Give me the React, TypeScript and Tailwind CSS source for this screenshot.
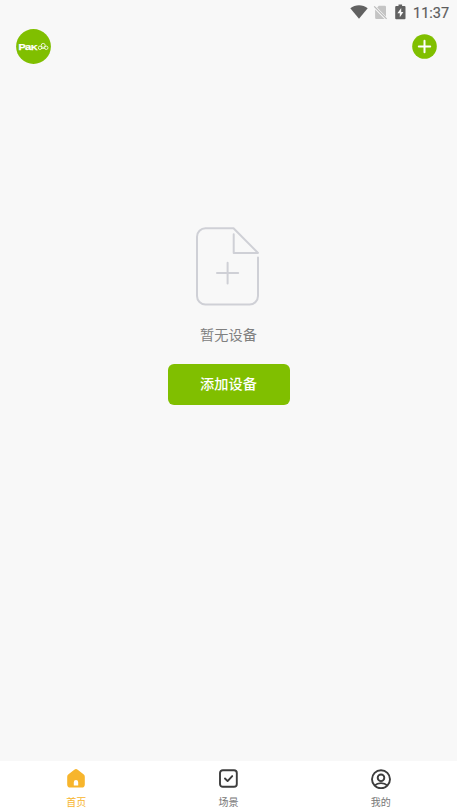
import type { ReactNode } from "react"

const WifiIcon = () => (
  <svg width="18" height="14" viewBox="0 0 18 14" fill="#616161">
    <path d="M0.3 3.2C2.8 1.3 5.8 0.3 9 0.3s6.2 1 8.7 2.9L9 13.8Z" />
  </svg>
)

const NoSimIcon = () => (
  <svg width="15" height="15" viewBox="0 0 15 15">
    <path
      d="M5.8 0.8h6a1.2 1.2 0 0 1 1.2 1.2v9.7L4.2 2.5ZM2.1 4.6l9.4 9.4H3.3a1.2 1.2 0 0 1-1.2-1.2Z"
      fill="#c4c4c4"
    />
    <path d="M1.2 1.4 13.6 13.8" stroke="#b9b9b9" strokeWidth="1.2" />
  </svg>
)

const BatteryIcon = () => (
  <svg width="11" height="16" viewBox="0 0 11 16">
    <path
      d="M3.5 0.5h3.6v1.4h2.4a1 1 0 0 1 1 1v11.3a1 1 0 0 1-1 1H1.2a1 1 0 0 1-1-1V2.9a1 1 0 0 1 1-1h2.3Z"
      fill="#616161"
    />
    <path d="M6.2 3.9 2.4 9.3h2.4v3.9L8.4 7.9H6.2Z" fill="#f8f8f8" />
  </svg>
)

const StatusBar = () => (
  <div className="flex h-6 items-center justify-end pr-[7px]">
    <WifiIcon />
    <div className="ml-[5px]">
      <NoSimIcon />
    </div>
    <div className="ml-[7px]">
      <BatteryIcon />
    </div>
    <span className="ml-[7px] w-[37px] pt-[3px] text-[14.5px] leading-5 whitespace-nowrap text-[#5c5c5c] [-webkit-text-stroke:0.2px_#5c5c5c]">
      11:37
    </span>
  </div>
)

const Logo = () => (
  <svg width="35" height="35" viewBox="0 0 35 35">
    <circle cx="17.5" cy="17.5" r="17.4" fill="#80bf00" />
    <g
      fontFamily="Liberation Sans, sans-serif"
      fontWeight="700"
      fill="#fff"
      stroke="#fff"
      strokeWidth="0.25"
    >
      <text x="2.6" y="20.8" fontSize="8.6" textLength="7.2" lengthAdjust="spacingAndGlyphs">
        P
      </text>
      <text x="9" y="20.8" fontSize="8.2" textLength="6.2" lengthAdjust="spacingAndGlyphs">
        a
      </text>
      <text x="15" y="20.8" fontSize="6.8" textLength="6.6" lengthAdjust="spacingAndGlyphs">
        K
      </text>
    </g>
    <g fill="none" stroke="#fff" strokeWidth="0.8">
      <circle cx="24" cy="18.8" r="1.7" />
      <circle cx="27.2" cy="16.4" r="2" />
      <circle cx="30.3" cy="18.8" r="1.7" />
      <path d="M25.4 19.4h3.4" />
    </g>
  </svg>
)

const AddIcon = () => (
  <svg width="25" height="25" viewBox="0 0 25 25">
    <circle cx="12.5" cy="12.5" r="12.3" fill="#80bf00" />
    <path
      d="M6.8 12.5h11.4M12.5 6.8v11.4"
      stroke="#fff"
      strokeWidth="2"
      strokeLinecap="round"
    />
  </svg>
)

const EmptyIcon = () => (
  <svg
    width="65"
    height="80"
    viewBox="0 0 65 80"
    fill="none"
    stroke="#cfd0d6"
    strokeWidth="2"
    strokeLinecap="round"
    strokeLinejoin="round"
  >
    <path d="M62 31.5V70a8.5 8.5 0 0 1-8.5 8.5h-44A8.5 8.5 0 0 1 1 70V10.7a8.5 8.5 0 0 1 8.5-8.5h28L62 26.9H37.7V8.2" />
    <path d="M21 47h21.2M31.6 36.7v20.8" />
  </svg>
)

const HomeIcon = () => (
  <svg width="20" height="21" viewBox="0 0 20 21">
    <path
      d="M8.3 1.8a2.7 2.7 0 0 1 3.4 0l5.8 4.4a3 3 0 0 1 1.3 2.5v7.8a3.1 3.1 0 0 1-3.1 3.1H4.3a3.1 3.1 0 0 1-3.1-3.1V8.7a3 3 0 0 1 1.3-2.5Z"
      fill="#f7b52c"
    />
    <path d="M7.8 17.6v-3.4a2.2 2.2 0 0 1 4.4 0v3.4Z" fill="#fff" />
  </svg>
)

const SceneIcon = () => (
  <svg
    width="20"
    height="21"
    viewBox="0 0 20 21"
    fill="none"
    stroke="#3d3d3d"
    strokeWidth="1.9"
    strokeLinecap="round"
    strokeLinejoin="round"
  >
    <rect x="2" y="2.2" width="16.8" height="16.6" rx="2.8" />
    <path d="m7 10.5 2.6 2.6 4.6-5" />
  </svg>
)

const ProfileIcon = () => (
  <svg
    width="20"
    height="21"
    viewBox="0 0 20 21"
    fill="none"
    stroke="#3d3d3d"
    strokeWidth="1.9"
  >
    <circle cx="10" cy="11.3" r="9" />
    <circle cx="10" cy="9.8" r="3.3" />
    <path d="M3.8 17.4c1.7-1.7 3.8-2.3 6.2-2.3s4.5.6 6.2 2.3" />
  </svg>
)

type TabProps = {
  icon: ReactNode
  label: string
  active?: boolean
}

const Tab = ({ icon, label, active }: TabProps) => (
  <button className="flex flex-1 flex-col items-center pt-[7px]">
    {icon}
    <span
      className={
        active
          ? "mt-[7px] text-[10px] leading-[14px] text-[#f7b52c]"
          : "mt-[7px] text-[10px] leading-[14px] text-[#777]"
      }
    >
      {label}
    </span>
  </button>
)

export default function App() {
  return (
    <div className="flex h-screen flex-col bg-[#f8f8f8] font-['Roboto','Noto_Sans_CJK_SC',sans-serif]">
      <StatusBar />

      <header className="flex items-start justify-between pt-[5px] pr-5 pl-4">
        <Logo />
        <button className="mt-[5px]" aria-label="添加">
          <AddIcon />
        </button>
      </header>

      <main className="flex flex-1 flex-col items-center pt-[162px]">
        <EmptyIcon />
        <p className="mt-[18px] pt-[0.5px] text-[14.2px] leading-5 text-[#808080]">
          暂无设备
        </p>
        <button className="mt-[19px] h-[41px] w-[122px] rounded-md bg-[#80bf00] pt-px text-[14.2px] font-medium text-white">
          添加设备
        </button>
      </main>

      <nav className="flex h-[51px] bg-white">
        <Tab icon={<HomeIcon />} label="首页" active />
        <Tab icon={<SceneIcon />} label="场景" />
        <Tab icon={<ProfileIcon />} label="我的" />
      </nav>
    </div>
  )
}
